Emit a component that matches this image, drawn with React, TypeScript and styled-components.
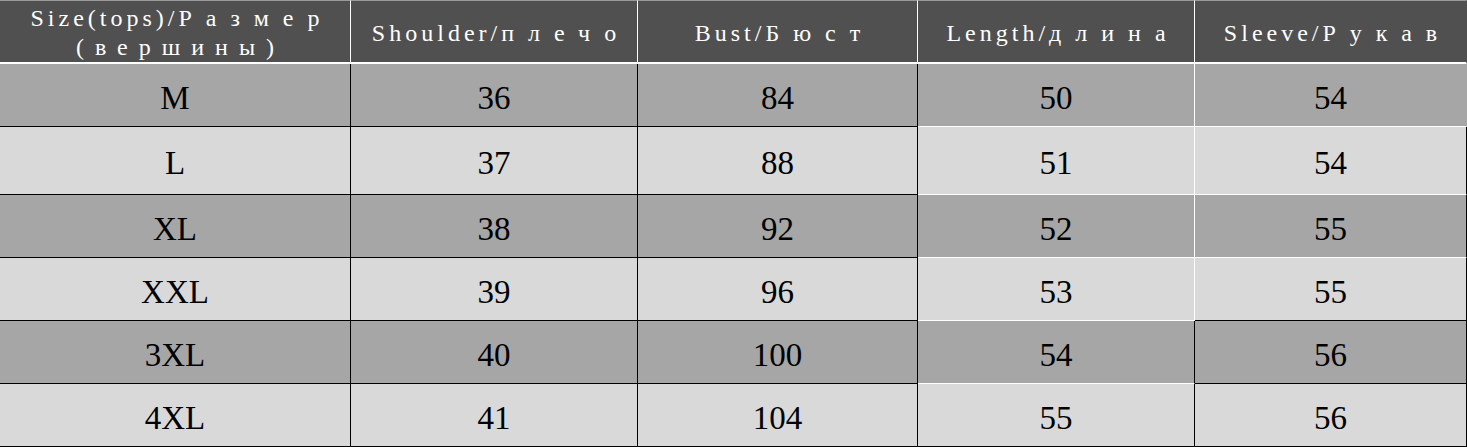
import styled, { createGlobalStyle } from 'styled-components';

const GlobalStyle = createGlobalStyle`
    body {
        margin: 0;
        background: #ffffff;
        font-family: "Liberation Serif", "Noto Sans CJK SC", serif;
    }
`;

interface Column {
    latin: string;
    cyrillic: string;
    extra?: string;
}

const columns: Column[] = [
    { latin: 'Size(tops)/', cyrillic: 'Размер', extra: '(вершины)' },
    { latin: 'Shoulder/', cyrillic: 'плечо' },
    { latin: 'Bust/', cyrillic: 'Бюст' },
    { latin: 'Length/', cyrillic: 'длина' },
    { latin: 'Sleeve/', cyrillic: 'Рукав' },
];

const rows: string[][] = [
    ['M', '36', '84', '50', '54'],
    ['L', '37', '88', '51', '54'],
    ['XL', '38', '92', '52', '55'],
    ['XXL', '39', '96', '53', '55'],
    ['3XL', '40', '100', '54', '56'],
    ['4XL', '41', '104', '55', '56'],
];

const BLACK = '#000000';
const WHITE = '#ffffff';

// the table mixes black and white rules: left block black, right block white,
// and the last two sleeve cells boxed in black
const bottomColor = (row: number, col: number) => {
    if (row === rows.length - 1) return BLACK;
    if (col < 3) return BLACK;
    if (col === 3) return WHITE;
    return row >= 3 ? BLACK : WHITE;
};

const rightColor = (row: number, col: number, shade: string) => {
    if (col < 3) return BLACK;
    if (col === 3) return row >= 4 ? BLACK : WHITE;
    return row >= 1 ? BLACK : shade;
};

export default function App() {
    return (
        <>
            <GlobalStyle />
            <Table>
                {columns.map((c, i) => (
                    <HeadCell key={c.latin} $last={i === columns.length - 1}>
                        <HeadLine>
                            {c.latin}
                            <Spaced>{c.cyrillic}</Spaced>
                        </HeadLine>
                        {c.extra && (
                            <HeadLine>
                                <Spaced $narrow>{c.extra}</Spaced>
                            </HeadLine>
                        )}
                    </HeadCell>
                ))}
                {rows.map((r, ri) => {
                    const shade = ri % 2 === 0 ? '#a6a6a6' : '#d9d9d9';
                    return r.map((v, ci) => (
                        <Cell
                            key={`${ri}-${ci}`}
                            $bg={shade}
                            $bottom={bottomColor(ri, ci)}
                            $right={rightColor(ri, ci, shade)}
                        >
                            {v}
                        </Cell>
                    ));
                })}
            </Table>
        </>
    );
}

const Table = styled.div`
    display: grid;
    grid-template-columns: 351px 287px 280px 277px 272px;
    grid-template-rows: 64px 63px 68px 63px 63px 63px 63px;
    width: 1467px;
`;

const HeadCell = styled.div<{ $last: boolean }>`
    box-sizing: border-box;
    display: flex;
    flex-direction: column;
    align-items: center;
    justify-content: center;
    padding-top: 3px;
    background: #505050;
    color: #ffffff;
    border-top: 1px solid #9a9a9a;
    border-bottom: 2px solid #ffffff;
    border-right: 1px solid ${(p) => (p.$last ? '#505050' : '#ffffff')};
    font-size: 24px;
    letter-spacing: 4px;
    line-height: 29px;
`;

const HeadLine = styled.div`
    white-space: nowrap;
`;

const Spaced = styled.span<{ $narrow?: boolean }>`
    letter-spacing: ${(p) => (p.$narrow ? 11 : 14)}px;
    margin-right: ${(p) => (p.$narrow ? -11 : -14)}px;
`;

const Cell = styled.div<{ $bg: string; $bottom: string; $right: string }>`
    box-sizing: border-box;
    display: flex;
    align-items: center;
    justify-content: center;
    padding-top: 6px;
    background: ${(p) => p.$bg};
    border-bottom: 1px solid ${(p) => p.$bottom};
    border-right: 1px solid ${(p) => p.$right};
    color: #000000;
    font-size: 33px;
`;
